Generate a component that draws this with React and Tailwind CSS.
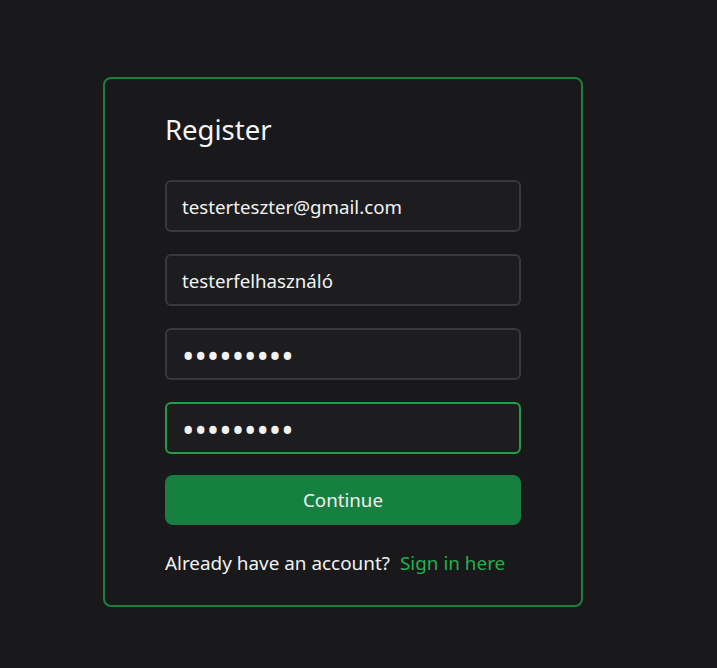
import { useState } from 'react';

const App = () => {
  const [email, setEmail] = useState('testerteszter@gmail.com');
  const [username, setUsername] = useState('testerfelhasználó');
  const [password, setPassword] = useState('123456789');
  const [confirm, setConfirm] = useState('123456789');

  const inputClass =
    'w-full h-[52px] px-[15px] rounded-md bg-[#1d1d20] border-2 text-[#f2f2f2] outline-none';

  return (
    <div className="min-h-screen bg-[#19191b] pt-[77px] pl-[103px]" style={{ fontFamily: '"Noto Sans", "Open Sans", sans-serif' }}>
      <div className="w-[480px] h-[530px] rounded-lg border-2 border-[#1b7f3e] px-[60px] pt-[33px]">
        {/* Header */}
        <h1 className="text-[27.5px] leading-[36px] text-[#f5f5f5] mb-[32px]">Register</h1>

        <div className="flex flex-col gap-[22px]">
          <input type="email" value={email} onChange={(e) => setEmail(e.target.value)}
            className={`${inputClass} text-[18.7px] border-[#38383d]`} />
          <input type="text" value={username} onChange={(e) => setUsername(e.target.value)}
            className={`${inputClass} text-[18.7px] border-[#38383d]`} />
          <input type="password" value={password} onChange={(e) => setPassword(e.target.value)}
            className={`${inputClass} text-[33px] pt-[3px] border-[#38383d]`} />
          <input type="password" value={confirm} onChange={(e) => setConfirm(e.target.value)}
            className={`${inputClass} text-[33px] pt-[3px] border-[#1f9d4a]`} />
        </div>

        <button className="mt-[21px] w-full h-[50px] rounded-lg bg-[#168040] text-[18.7px] text-[#f2f2f2]">
          Continue
        </button>

        <p className="mt-[24px] text-[18.9px] text-[#f2f2f2]">
          Already have an account?<span className="ml-[10px] text-[#22b04f]">Sign in here</span>
        </p>
      </div>
    </div>
  );
};

export default App;
